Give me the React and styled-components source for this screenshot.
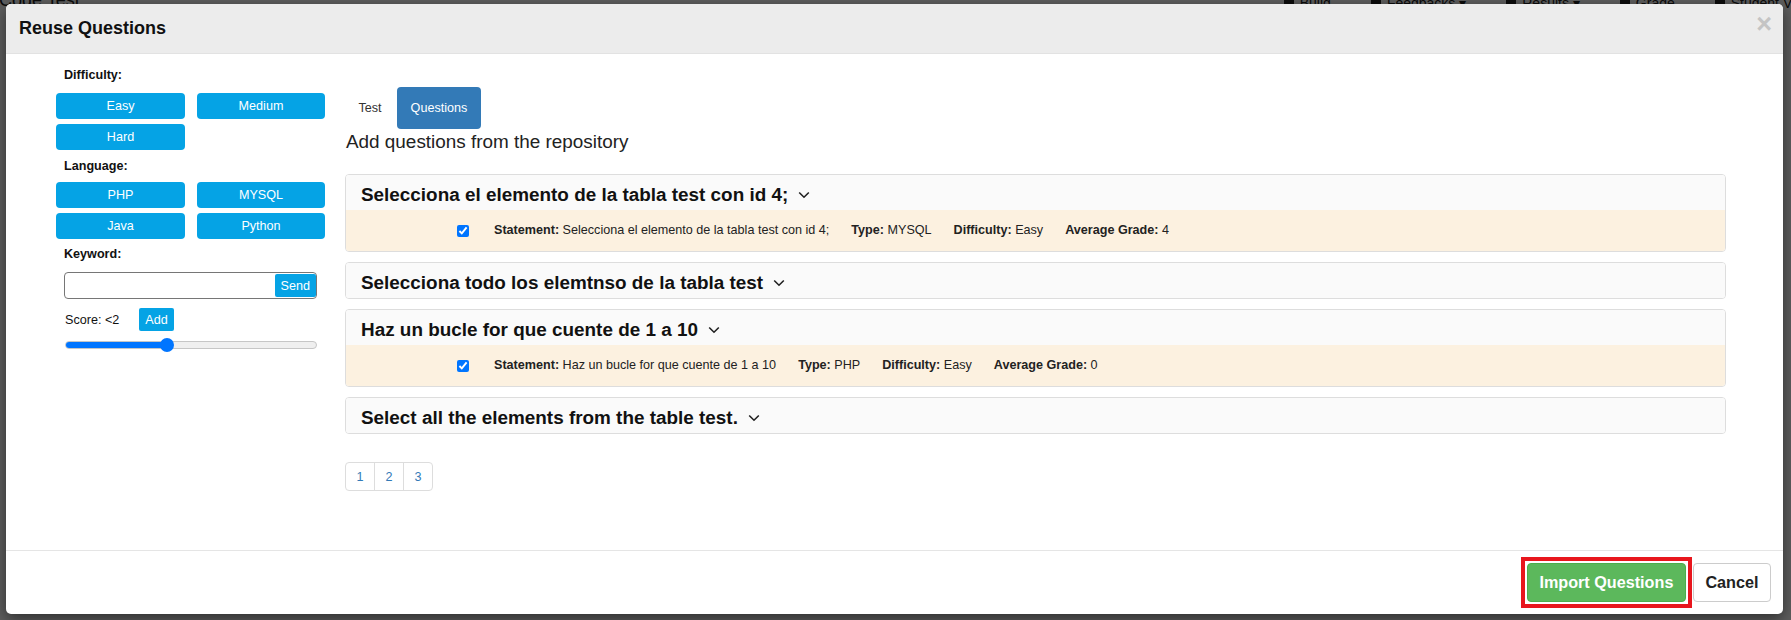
import React from "react";
import styled, { createGlobalStyle } from "styled-components";

const GlobalStyle = createGlobalStyle`
  html, body { margin: 0; padding: 0; }
  body {
    font-family: "Liberation Sans", Arial, sans-serif;
    background: #fff;
    color: #333;
    overflow: hidden;
  }
  * { box-sizing: border-box; }
`;

const Page = styled.div`
  position: relative;
  width: 1791px;
  height: 620px;
  overflow: hidden;
  background: #fff;
`;

const PageBar = styled.div`
  display: flex;
  align-items: flex-end;
  height: 11px;
  overflow: hidden;
  color: #222;
`;

const PageTitle = styled.div`
  font-size: 18px;
  line-height: 21px;
  margin-left: -1px;
`;

const PageNav = styled.nav`
  display: flex;
  align-items: flex-end;
  gap: 40px;
  margin-left: auto;
  margin-right: -22px;
  font-size: 14px;
  line-height: 16px;
`;

const NavItem = styled.span`
  display: flex;
  align-items: flex-end;
  gap: 6px;
  &::before {
    content: "";
    width: 10px;
    height: 12px;
    background: #222;
  }
`;

const Backdrop = styled.div`
  position: absolute;
  inset: 0;
  background: rgba(0, 0, 0, 0.63);
`;

const Modal = styled.div`
  position: absolute;
  left: 6px;
  top: 4px;
  width: 1777px;
  height: 610px;
  background: #fff;
  border-radius: 5px;
  box-shadow: 0 5px 15px rgba(0, 0, 0, 0.5);
  display: flex;
  flex-direction: column;
  overflow: hidden;
`;

const Header = styled.div`
  flex: none;
  height: 50px;
  display: flex;
  align-items: center;
  justify-content: space-between;
  padding: 0 11px 0 13px;
  background: #ececec;
  border-bottom: 1px solid #e2e2e2;
`;

const Title = styled.h4`
  margin: 0;
  font-size: 18px;
  font-weight: bold;
  color: #111;
`;

const Close = styled.button`
  border: 0;
  background: none;
  padding: 0;
  margin-top: -8px;
  font-family: "Liberation Sans", Arial, sans-serif;
  font-size: 27px;
  line-height: 1;
  font-weight: bold;
  color: #c4c4c4;
  cursor: pointer;
`;

const Body = styled.div`
  flex: 1;
  display: flex;
  gap: 20px;
  padding: 12px 57px 0 50px;
`;

const LeftCol = styled.div`
  flex: none;
  width: 269px;
  display: flex;
  flex-direction: column;
`;

const Label = styled.div`
  padding-left: 8px;
  font-size: 12.6px;
  line-height: 18px;
  font-weight: bold;
  color: #111;
  margin: ${(p) => p.$m || "0 0 9px"};
`;

const ButtonGrid = styled.div`
  display: grid;
  grid-template-columns: 129px 128px;
  column-gap: 12px;
  row-gap: 5px;
`;

const FilterButton = styled.button`
  height: 26px;
  border: 0;
  border-radius: 4px;
  background: #05a3e5;
  color: #fff;
  font-family: "Liberation Sans", Arial, sans-serif;
  font-size: 12.6px;
  padding: 0;
  cursor: pointer;
`;

const InputGroup = styled.div`
  margin: 0 8px;
  height: 27px;
  display: flex;
  align-items: center;
  border: 1px solid #767676;
  border-radius: 4px;
  padding: 1px 0;
`;

const TextInput = styled.input`
  flex: 1;
  min-width: 0;
  height: 100%;
  border: 0;
  outline: none;
  background: transparent;
  font-family: "Liberation Sans", Arial, sans-serif;
  font-size: 12.6px;
`;

const SmallButton = styled.button`
  flex: none;
  height: 23px;
  padding: 0 ${(p) => p.$px || 6}px;
  border: 0;
  border-radius: 2px;
  background: #05a3e5;
  color: #fff;
  font-family: "Liberation Sans", Arial, sans-serif;
  font-size: 12.6px;
  cursor: pointer;
`;

const ScoreRow = styled.div`
  margin: 9px 8px 0 9px;
  display: flex;
  align-items: center;
  gap: 20px;
  font-size: 12.6px;
  color: #111;
`;

const Slider = styled.div`
  position: relative;
  margin: 7px 8px 0 9px;
  height: 14px;
  display: flex;
  align-items: center;
`;

const Track = styled.div`
  width: 100%;
  height: 8px;
  border-radius: 4px;
  background: #efefef;
  border: 1px solid #c6c6c6;
  overflow: hidden;
`;

const Fill = styled.div`
  height: 100%;
  background: #0075ff;
`;

const Thumb = styled.div`
  position: absolute;
  top: 0;
  width: 14px;
  height: 14px;
  border-radius: 50%;
  background: #0075ff;
`;

const RightCol = styled.div`
  flex: 1;
  min-width: 0;
  display: flex;
  flex-direction: column;
  padding-top: 21px;
`;

const Tabs = styled.div`
  display: flex;
  gap: 2px;
`;

const Tab = styled.div`
  height: 42px;
  line-height: 42px;
  padding: 0 13.5px;
  border-radius: 4px;
  font-size: 12.6px;
  background: ${(p) => (p.$active ? "#337ab7" : "transparent")};
  color: ${(p) => (p.$active ? "#fff" : "#333")};
`;

const Heading = styled.div`
  margin: 2px 0 21px 1px;
  font-size: 18.9px;
  line-height: 22px;
  color: #222;
`;

const CardList = styled.div`
  display: flex;
  flex-direction: column;
  gap: 10px;
`;

const Card = styled.div`
  border: 1px solid #ddd;
  border-radius: 4px;
  overflow: hidden;
  background: #fff;
`;

const CardHeader = styled.div`
  display: flex;
  align-items: center;
  gap: 10px;
  padding: 9px 15px 4px;
  background: #fafafa;
`;

const CardTitle = styled.span`
  font-size: 18.9px;
  line-height: 22px;
  font-weight: bold;
  color: #111;
`;

const Details = styled.div`
  display: flex;
  align-items: center;
  gap: 22px;
  padding: 12px 0 12px 111px;
  background: #fcf1e0;
  font-size: 12.6px;
  line-height: 17px;
  color: #222;
`;

const Check = styled.input`
  width: 12px;
  height: 12px;
  margin: 0 3px 0 0;
`;

const Field = styled.span`
  white-space: nowrap;
`;

const Pagination = styled.div`
  display: flex;
  margin-top: 28px;
`;

const PageLink = styled.a`
  width: 30px;
  height: 29px;
  display: flex;
  align-items: center;
  justify-content: center;
  border: 1px solid #ddd;
  margin-left: -1px;
  color: #337ab7;
  font-size: 12.6px;
  text-decoration: none;
  &:first-child {
    margin-left: 0;
    border-radius: 4px 0 0 4px;
  }
  &:last-child {
    border-radius: 0 4px 4px 0;
  }
`;

const Footer = styled.div`
  flex: none;
  height: 64px;
  border-top: 1px solid #e5e5e5;
  display: flex;
  align-items: center;
  justify-content: flex-end;
  gap: 1px;
  padding: 0 12px;
`;

const HighlightFrame = styled.span`
  display: inline-flex;
  padding: 2px;
  border: 4px solid #e8161d;
`;

const FooterButton = styled.button`
  height: 39px;
  padding: 0 11.5px;
  border-radius: 4px;
  font-family: "Liberation Sans", Arial, sans-serif;
  font-size: 16.2px;
  font-weight: bold;
  cursor: pointer;
  border: 1px solid ${(p) => (p.$primary ? "#4cae4c" : "#ccc")};
  background: ${(p) => (p.$primary ? "#5cb85c" : "#fff")};
  color: ${(p) => (p.$primary ? "#fff" : "#222")};
`;

const Chevron = () => (
  <svg width="12" height="8" viewBox="0 0 12 8" aria-hidden="true">
    <polyline
      points="1.2,1.5 6,6.2 10.8,1.5"
      fill="none"
      stroke="#222"
      strokeWidth="1.6"
    />
  </svg>
);

const questions = [
  {
    title: "Selecciona el elemento de la tabla test con id 4;",
    open: true,
    type: "MYSQL",
    difficulty: "Easy",
    grade: "4",
  },
  { title: "Selecciona todo los elemtnso de la tabla test", open: false },
  {
    title: "Haz un bucle for que cuente de 1 a 10",
    open: true,
    type: "PHP",
    difficulty: "Easy",
    grade: "0",
  },
  { title: "Select all the elements from the table test.", open: false },
];

const SCORE = 2;
const SCORE_MAX = 5;

export default function App() {
  const pct = SCORE / SCORE_MAX;
  return (
    <>
      <GlobalStyle />
      <Page>
        <PageBar>
          <PageTitle>Code Test</PageTitle>
          <PageNav>
            <NavItem>Build</NavItem>
            <NavItem>Feedbacks ▾</NavItem>
            <NavItem>Results ▾</NavItem>
            <NavItem>Grade</NavItem>
            <NavItem>Student View</NavItem>
          </PageNav>
        </PageBar>
        <Backdrop />
        <Modal>
          <Header>
            <Title>Reuse Questions</Title>
            <Close aria-label="Close">×</Close>
          </Header>
          <Body>
            <LeftCol>
              <Label>Difficulty:</Label>
              <ButtonGrid>
                <FilterButton>Easy</FilterButton>
                <FilterButton>Medium</FilterButton>
                <FilterButton>Hard</FilterButton>
              </ButtonGrid>
              <Label $m="7px 0 7px">Language:</Label>
              <ButtonGrid>
                <FilterButton>PHP</FilterButton>
                <FilterButton>MYSQL</FilterButton>
                <FilterButton>Java</FilterButton>
                <FilterButton>Python</FilterButton>
              </ButtonGrid>
              <Label $m="6px 0 9px">Keyword:</Label>
              <InputGroup>
                <TextInput type="text" />
                <SmallButton $px={6}>Send</SmallButton>
              </InputGroup>
              <ScoreRow>
                <span>Score: &lt;{SCORE}</span>
                <SmallButton $px={6}>Add</SmallButton>
              </ScoreRow>
              <Slider>
                <Track>
                  <Fill style={{ width: `calc(7px + ${pct} * (100% - 14px))` }} />
                </Track>
                <Thumb style={{ left: `calc(${pct} * (100% - 14px))` }} />
              </Slider>
            </LeftCol>
            <RightCol>
              <Tabs>
                <Tab>Test</Tab>
                <Tab $active>Questions</Tab>
              </Tabs>
              <Heading>Add questions from the repository</Heading>
              <CardList>
                {questions.map((q) => (
                  <Card key={q.title}>
                    <CardHeader>
                      <CardTitle>{q.title}</CardTitle>
                      <Chevron />
                    </CardHeader>
                    {q.open && (
                      <Details>
                        <Check type="checkbox" checked readOnly />
                        <Field>
                          <b>Statement:</b> {q.title}
                        </Field>
                        <Field>
                          <b>Type:</b> {q.type}
                        </Field>
                        <Field>
                          <b>Difficulty:</b> {q.difficulty}
                        </Field>
                        <Field>
                          <b>Average Grade:</b> {q.grade}
                        </Field>
                      </Details>
                    )}
                  </Card>
                ))}
              </CardList>
              <Pagination>
                <PageLink href="#">1</PageLink>
                <PageLink href="#">2</PageLink>
                <PageLink href="#">3</PageLink>
              </Pagination>
            </RightCol>
          </Body>
          <Footer>
            <HighlightFrame>
              <FooterButton $primary>Import Questions</FooterButton>
            </HighlightFrame>
            <FooterButton>Cancel</FooterButton>
          </Footer>
        </Modal>
      </Page>
    </>
  );
}
